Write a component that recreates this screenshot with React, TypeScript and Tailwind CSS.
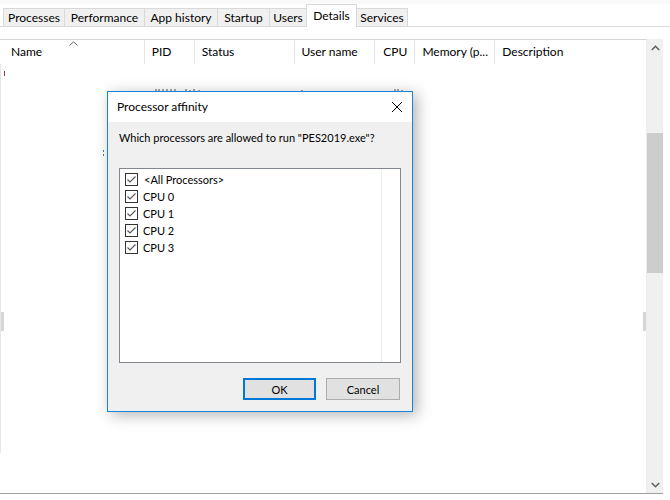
import React from "react";

function Check() {
  return (
    <span className="w-[13px] h-[13px] border border-[#333333] bg-white flex items-center justify-center shrink-0">
      <svg width="11" height="11" viewBox="0 0 11 11">
        <polyline points="1.5,5.5 4,8 9.5,2.5" fill="none" stroke="#5a5a5a" strokeWidth="1.2" />
      </svg>
    </span>
  );
}

const tabs: { label: string; w: string; sel?: boolean }[] = [
  { label: "Processes", w: "w-[61px]" },
  { label: "Performance", w: "w-[80px]" },
  { label: "App history", w: "w-[73px]" },
  { label: "Startup", w: "w-[52px]" },
  { label: "Users", w: "w-[37px]" },
  { label: "Details", w: "w-[51px]", sel: true },
  { label: "Services", w: "w-[51px]" },
];

const cols: { label: string; w: string; right?: boolean; pl?: string }[] = [
  { label: "Name", w: "w-[145px]", pl: "pl-[11px]" },
  { label: "PID", w: "w-[50px]" },
  { label: "Status", w: "w-[100px]" },
  { label: "User name", w: "w-[81px]" },
  { label: "CPU", w: "w-[40px]", right: true },
  { label: "Memory (p...", w: "w-[80px]" },
  { label: "Description", w: "w-[151px]" },
];

export default function App() {
  return (
    <div className="relative w-[670px] h-[500px] bg-white overflow-hidden text-[12px] text-black font-['Lato','Segoe_UI',sans-serif] leading-none">
      <div className="h-[4px] bg-[#f9f9f9]" />
      {/* tabs */}
      <div className="flex items-end h-[23px] pl-[3px] border-b border-[#d9d9d9]">
        {tabs.map((t, i) =>
          t.sel ? (
            <div
              key={t.label}
              className={`${t.w} h-[23px] -mb-px bg-white border-l border-r border-t border-[#d9d9d9] flex items-center justify-center`}
            >
              {t.label}
            </div>
          ) : (
            <div
              key={t.label}
              className={`${t.w} h-[18px] bg-[#f0f0f0] border-t border-[#d9d9d9] ${
                i === tabs.length - 1 ? "border-r" : "border-l"
              } flex items-center justify-center whitespace-nowrap`}
            >
              {t.label}
            </div>
          )
        )}
      </div>

      {/* list area */}
      <div className="mt-[12px] flex w-[663px] h-[455px] border-b border-[#a0a0a0]">
        <div className="relative w-[647px] flex flex-col border-t border-[#d4d4d4] border-r border-r-[#e8eef7]">
          {/* header */}
          <div className="flex h-[24px]">
            {cols.map((c, i) => (
              <div
                key={c.label}
                className={`relative ${c.w} h-full flex items-center ${
                  c.right ? "justify-end pr-[7px]" : c.pl ?? "pl-[7px]"
                } ${i < cols.length - 1 ? "border-r border-[#e5e5e5]" : ""} whitespace-nowrap`}
              >
                {c.label}
                {i === 0 && (
                  <svg className="absolute top-[1px] left-[69px]" width="9" height="5" viewBox="0 0 9 5">
                    <polyline points="0.5,4.5 4.5,0.8 8.5,4.5" fill="none" stroke="#666" strokeWidth="1" />
                  </svg>
                )}
              </div>
            ))}
          </div>
          {/* body */}
          <div className="flex-1 flex">
            <div className="w-px h-[389px] bg-[#e6e6e6]" />
          </div>
          <span className="absolute left-[4px] top-[31px] w-px h-[5px] bg-[#8a3b4f]" />
          <span className="absolute left-[1px] top-[272px] w-[3px] h-[19px] bg-[#d6d6d6]" />
          <span className="absolute right-0 top-[272px] w-[3px] h-[19px] bg-[#d6d6d6]" />
          <span className="absolute left-[103px] top-[110px] w-px h-[2px] bg-[#3a7bd5]" />
          <span className="absolute left-[103px] top-[114px] w-px h-[2px] bg-[#3a7bd5]" />
          {/* remnants of a row hidden behind the dialog */}
          <svg className="absolute left-[150px] top-[48px]" width="265" height="4" viewBox="0 0 265 4">
            <g stroke="#555" strokeWidth="1">
              <path d="M6 1v3M9 1v3M13 1v3M17 1v3M21 1v3M25 1v3" />
              <path d="M36 1v3M40 2v2M44 1v3M49 2v2" />
              <path d="M152 2v2" />
              <path d="M245 1v3M248 1v3M252 2v2" />
            </g>
          </svg>
        </div>
        {/* scrollbar */}
        <div className="w-[16px] bg-[#f0f0f0] flex flex-col">
          <div className="h-[17px] flex items-center justify-center">
            <svg width="9" height="6" viewBox="0 0 9 6">
              <polyline points="0.8,5 4.5,1.3 8.2,5" fill="none" stroke="#606060" strokeWidth="1.6" />
            </svg>
          </div>
          <div className="flex-1 pt-[77px]">
            <div className="h-[140px] bg-[#cdcdcd]" />
          </div>
          <div className="h-[17px] flex items-center justify-center">
            <svg width="9" height="6" viewBox="0 0 9 6">
              <polyline points="0.8,1 4.5,4.7 8.2,1" fill="none" stroke="#606060" strokeWidth="1.6" />
            </svg>
          </div>
        </div>
      </div>

      {/* dialog */}
      <div className="absolute left-[107px] top-[91px] w-[306px] h-[321px] border border-[#1883d7] bg-[#f0f0f0] flex flex-col shadow-[4px_3px_14px_rgba(0,0,0,0.3)]">
        <div className="h-[30px] bg-white flex items-center justify-between pl-[9px] pr-[9px]">
          <span className="text-[12px]">Processor affinity</span>
          <svg width="12" height="12" viewBox="0 0 12 12">
            <path d="M1 1 L11 11 M11 1 L1 11" stroke="#000" strokeWidth="1" />
          </svg>
        </div>
        <div className="flex-1 flex flex-col px-[11px] pt-[8px] text-[11px]">
          <div className="h-[14px] flex items-center whitespace-nowrap">
            Which processors are allowed to run "PES2019.exe"?
          </div>
          <div className="mt-[24px] w-[282px] h-[195px] border border-[#828790] bg-white flex">
            <div className="w-[261px] flex flex-col pt-[2px] pl-[5px]">
              {["<All Processors>", "CPU 0", "CPU 1", "CPU 2", "CPU 3"].map((l, i) => (
                <div key={l} className="h-[17px] flex items-center gap-[5px]">
                  <Check />
                  <span className={i === 0 ? "pl-px" : ""}>{l}</span>
                </div>
              ))}
            </div>
            <div className="w-px bg-[#e9eef5]" />
          </div>
          <div className="mt-[15px] flex justify-end gap-[10px] pr-px">
            <button className="w-[73px] h-[22px] bg-[#e1e1e1] border-2 border-[#0078d7] flex items-center justify-center text-[11px]">
              OK
            </button>
            <button className="w-[74px] h-[22px] bg-[#e1e1e1] border border-[#adadad] flex items-center justify-center text-[11px]">
              Cancel
            </button>
          </div>
        </div>
      </div>
    </div>
  );
}
